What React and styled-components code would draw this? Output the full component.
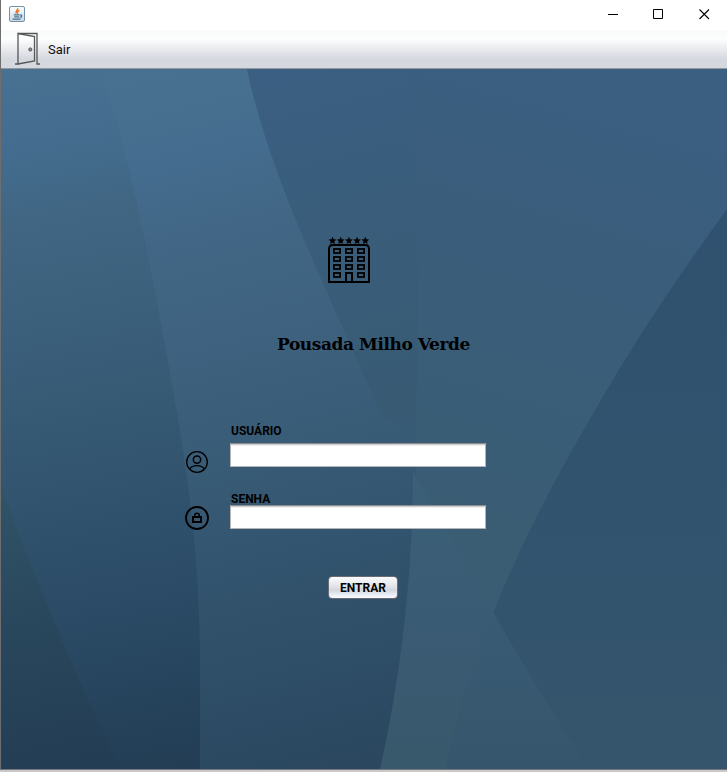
import React from 'react';
import styled, { createGlobalStyle } from 'styled-components';

const GlobalStyle = createGlobalStyle`
  * { box-sizing: border-box; }
  body { margin: 0; background: #c9c9cb; font-family: Roboto, 'Liberation Sans', sans-serif; overflow: hidden; }
`;

const Window = styled.div`
  display: flex;
  flex-direction: column;
  width: 727px;
  height: 770px;
  border-left: 1px solid #6e6e6e;
  border-bottom: 1px solid #77777b;
  background: #fff;
`;

const TitleBar = styled.header`
  display: flex;
  align-items: center;
  justify-content: space-between;
  flex: none;
  height: 30px;
  padding: 0 17px 2px 8px;
`;

const Controls = styled.div`
  display: flex;
  gap: 35px;
`;

const Control = styled.button`
  display: block;
  width: 11px;
  height: 11px;
  padding: 0;
  border: 0;
  background: none;
  svg { display: block; }
`;

const MenuBar = styled.nav`
  display: flex;
  flex: none;
  height: 39px;
  padding-left: 13px;
  border-bottom: 1px solid #95979f;
  background: linear-gradient(#f8faf9 0, #fdfefe 9px, #d5d8df 29px, #d5d8df 100%);
`;

const MenuItem = styled.div`
  display: flex;
  align-items: center;
  gap: 7px;
  font-size: 13px;
  color: #111;
  svg { display: block; }
`;

const Panel = styled.main`
  position: relative;
  display: flex;
  flex-direction: column;
  align-items: flex-start;
  flex: 1;
  min-height: 0;
  overflow: hidden;
`;

const Wallpaper = styled.svg`
  position: absolute;
  inset: 0;
  width: 726px;
  height: 700px;
`;

const Content = styled.div`
  z-index: 1;
  display: flex;
  flex-direction: column;
  align-items: flex-start;
  padding-top: 167px;
`;

const HotelIcon = styled.svg`
  display: block;
  margin-left: 326px;
`;

const Heading = styled.h1`
  margin: 46px 0 0 276px;
  height: 28px;
  font: 700 17px/28px 'DejaVu Serif', serif;
  letter-spacing: -0.42px;
  white-space: nowrap;
  color: #000;
`;

const Form = styled.form`
  display: flex;
  flex-direction: column;
  align-items: flex-start;
  margin: 66px 0 0 184px;
`;

const Field = styled.div`
  display: flex;
  align-items: flex-end;
  gap: 21px;
  height: ${(p) => p.$height}px;
  margin-bottom: ${(p) => p.$after}px;
`;

const FieldIcon = styled.svg`
  display: block;
  flex: none;
  margin-bottom: ${(p) => p.$drop}px;
`;

const FieldBody = styled.label`
  display: flex;
  flex-direction: column;
  height: 100%;
  justify-content: space-between;
`;

const Caption = styled.span`
  height: 13px;
  padding-left: 1px;
  font-size: 12px;
  line-height: 14px;
  font-weight: 700;
  color: #000;
`;

const Input = styled.input`
  display: block;
  width: 256px;
  height: 24px;
  padding: 2px 5px;
  border: 1px solid #b4b5b8;
  border-top-color: #8b8c90;
  border-radius: 0;
  outline: 0;
  background: linear-gradient(#cfcfd1 0, #cfcfd1 1px, #efefef 1px, #efefef 2px, #fff 2px);
`;

const Submit = styled.button`
  width: 70px;
  height: 23px;
  margin: 47px 0 0 143px;
  padding: 1px 0 0;
  border: 1px solid #696b76;
  border-radius: 4px;
  background: linear-gradient(#fafbfc 0, #e2e4e9 45%, #d3d6dd 62%, #f5f7ff 95%);
  font: 700 12px/18px Roboto, sans-serif;
  color: #000;
`;

const star = (cx, cy) =>
  Array.from({ length: 10 }, (_, i) => {
    const r = i % 2 ? 1.9 : 4;
    const a = -Math.PI / 2 + (i * Math.PI) / 5;
    return `${(cx + r * Math.cos(a)).toFixed(2)},${(cy + r * Math.sin(a)).toFixed(2)}`;
  }).join(' ');

const Hotel = () => (
  <HotelIcon width="44" height="48" viewBox="0 0 44 48" fill="none" stroke="#000" strokeWidth="2">
    {[5.5, 13.7, 21.9, 30.1, 38.3].map((x) => (
      <polygon key={x} points={star(x, 4.8)} fill="#000" stroke="none" />
    ))}
    <path d="M2 46V13Q2 9 6 9H38Q42 9 42 13V46Z" />
    {[7, 19, 31].map((x) =>
      [13, 21, 29, 37].map((y) =>
        x === 19 && y === 37 ? null : (
          <rect key={`${x}-${y}`} x={x - 0.1} y={y} width="6.2" height="4" strokeWidth="1.8" />
        )
      )
    )}
    <path d="M19 46V37H25V46" />
  </HotelIcon>
);

const Backdrop = () => (
  <Wallpaper viewBox="1 69 726 700" preserveAspectRatio="none">
    <defs>
      <linearGradient id="left" gradientUnits="userSpaceOnUse" x1="20" y1="60" x2="150" y2="780">
        <stop offset="0" stopColor="#487192" />
        <stop offset=".12" stopColor="#436c8e" />
        <stop offset=".22" stopColor="#406683" />
        <stop offset=".36" stopColor="#3b607c" />
        <stop offset=".5" stopColor="#365973" />
        <stop offset=".75" stopColor="#2b4b66" />
        <stop offset="1" stopColor="#223d54" />
      </linearGradient>
      <linearGradient id="corner" gradientUnits="userSpaceOnUse" x1="0" y1="485" x2="60" y2="770">
        <stop offset="0" stopColor="#315468" />
        <stop offset=".5" stopColor="#29475c" />
        <stop offset="1" stopColor="#233d54" />
      </linearGradient>
      <linearGradient id="band" gradientUnits="userSpaceOnUse" x1="170" y1="60" x2="340" y2="770">
        <stop offset="0" stopColor="#487191" />
        <stop offset=".14" stopColor="#446c8e" />
        <stop offset=".24" stopColor="#426786" />
        <stop offset=".45" stopColor="#3c607c" />
        <stop offset=".7" stopColor="#33546e" />
        <stop offset="1" stopColor="#2a475f" />
      </linearGradient>
      <linearGradient id="mid" gradientUnits="userSpaceOnUse" x1="290" y1="70" x2="380" y2="440">
        <stop offset="0" stopColor="#3a5f82" />
        <stop offset=".45" stopColor="#395d7a" />
        <stop offset="1" stopColor="#385a73" />
      </linearGradient>
      <linearGradient id="upper" gradientUnits="userSpaceOnUse" x1="590" y1="69" x2="450" y2="560">
        <stop offset="0" stopColor="#3b5f81" />
        <stop offset=".4" stopColor="#3a5d7b" />
        <stop offset="1" stopColor="#3a5d73" />
      </linearGradient>
      <linearGradient id="right" x1="0" y1="0" x2="0" y2="1">
        <stop offset="0" stopColor="#30516f" />
        <stop offset=".45" stopColor="#31536e" />
        <stop offset="1" stopColor="#35556c" />
      </linearGradient>
      <linearGradient id="wedge" x1="0" y1="0" x2="0" y2="1">
        <stop offset="0" stopColor="#3c6079" />
        <stop offset=".5" stopColor="#3a5b74" />
        <stop offset="1" stopColor="#38586b" />
      </linearGradient>
      <linearGradient id="fade" x1="0" y1="0" x2="0" y2="1">
        <stop offset="0" stopColor="#395b75" />
        <stop offset=".8" stopColor="#36576d" />
        <stop offset="1" stopColor="#35556c" />
      </linearGradient>
    </defs>
    <rect x="1" y="69" width="726" height="701" fill="url(#upper)" />
    <path d="M247 69H408Q422 235 416 420L413 480L382 415Q282 225 247 69Z" fill="url(#mid)" />
    <path d="M1 69H247C263 145 296 223 329 297C345 332 364 377 382 415Q391 424 416 420C416 540 408 650 380 770H1Z" fill="url(#band)" />
    <path d="M362 372C370 388 375 400 382 415L416 407V360Z" fill="#395b74" opacity=".28" />
    <path d="M1 69H101C132 165 150 264 165 345C184 449 202 550 200 690V770H1Z" fill="url(#left)" />
    <path d="M1 485Q48 618 121 770H1Z" fill="url(#corner)" />
    <path d="M727 209C674 282 632 345 590 419C543 500 477 620 445 770H727Z" fill="url(#right)" />
    <path d="M413 472C413 570 402 670 380 770H445C457 715 472 665 493 612Q455 542 413 472Z" fill="url(#wedge)" />
    <path d="M493 612C472 665 457 715 445 770H590Q540 695 493 612Z" fill="url(#fade)" />
  </Wallpaper>
);

export default function App() {
  return (
    <>
      <GlobalStyle />
      <Window>
        <TitleBar>
          <svg width="16" height="16" viewBox="0 0 16 16" fill="none">
            <defs>
              <linearGradient id="tile" x1="0" y1="0" x2="0" y2="1">
                <stop offset="0" stopColor="#fff" />
                <stop offset="1" stopColor="#c9d7e2" />
              </linearGradient>
            </defs>
            <rect x=".5" y=".5" width="15" height="15" rx="1.5" fill="url(#tile)" stroke="#7292a9" />
            <path d="M8.8 2.3C9 4.4 5.9 5 7.2 7.6M10.5 4.4Q7.5 5.4 8.8 7.6" stroke="#e66d17" strokeWidth="1.3" />
            <path d="M4.7 8.9H10.7M5.3 10.8H10.2M3.5 13.2H11.5M11 9H12.6V10.8L10.8 11.5" stroke="#47718f" strokeWidth="1.2" />
          </svg>
          <Controls>
            <Control aria-label="Minimizar">
              <svg width="11" height="11"><path d="M1 5.5H11" stroke="#000" /></svg>
            </Control>
            <Control aria-label="Maximizar">
              <svg width="11" height="11" fill="none"><path d="M.5 .5H9.5V9.5H.5Z" stroke="#000" /></svg>
            </Control>
            <Control aria-label="Fechar">
              <svg width="11" height="11"><path d="M.5 .5L10 10M10 .5L.5 10" stroke="#000" strokeWidth="1.1" /></svg>
            </Control>
          </Controls>
        </TitleBar>
        <MenuBar>
          <MenuItem>
            <svg width="27" height="34" viewBox="0 0 27 34" fill="none" stroke="#555759" strokeWidth="1.3">
              <path d="M1 32H4V1.5H23V32H26" />
              <path d="M4 1.5L20.5 4.5V29L4 32" />
              <circle cx="16.3" cy="17.5" r="1.6" fill="#888" strokeWidth="1" />
            </svg>
            Sair
          </MenuItem>
        </MenuBar>
        <Panel>
          <Backdrop />
          <Content>
            <Hotel />
            <Heading>Pousada Milho Verde</Heading>
            <Form onSubmit={(e) => e.preventDefault()}>
              <Field $height={43} $after={25}>
                <FieldIcon $drop={-7} width="24" height="24" viewBox="0 0 24 24" fill="none" stroke="#000" strokeWidth="1.3">
                  <circle cx="12" cy="12" r="10.3" />
                  <circle cx="12" cy="9.6" r="3.7" strokeWidth="1.5" />
                  <path d="M4.6 19C7.5 14.6 16.5 14.6 19.4 19" />
                </FieldIcon>
                <FieldBody>
                  <Caption>USUÁRIO</Caption>
                  <Input />
                </FieldBody>
              </Field>
              <Field $height={37} $after={0}>
                <FieldIcon $drop={-1} width="24" height="24" viewBox="0 0 24 24" fill="none" stroke="#000" strokeWidth="2">
                  <circle cx="12" cy="12" r="11" strokeWidth="1.8" />
                  <rect x="8" y="11" width="8" height="5" />
                  <path d="M9.8 11V9Q9.8 7.2 12 7.2Q14.2 7.2 14.2 9V11" strokeWidth="1.6" />
                </FieldIcon>
                <FieldBody>
                  <Caption>SENHA</Caption>
                  <Input type="password" />
                </FieldBody>
              </Field>
              <Submit>ENTRAR</Submit>
            </Form>
          </Content>
        </Panel>
      </Window>
    </>
  );
}
